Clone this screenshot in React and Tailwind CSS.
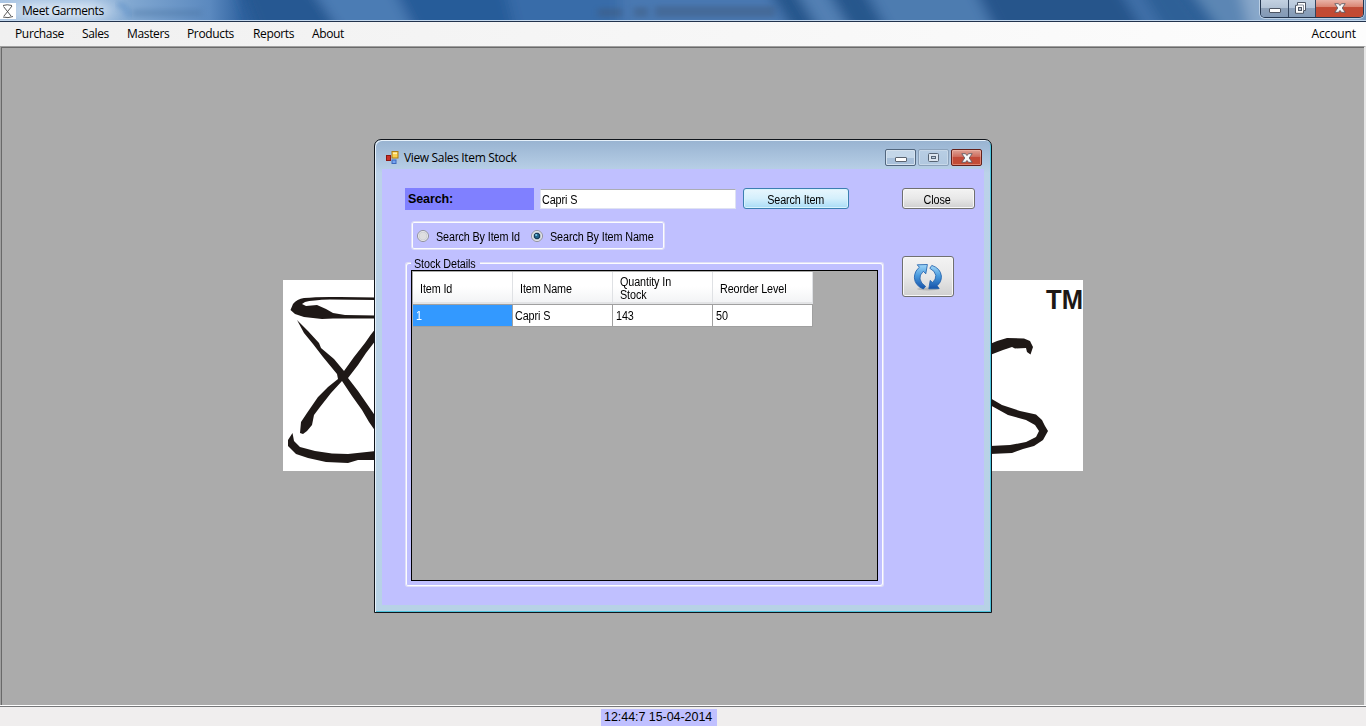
import React from 'react';

const ui = "font-['Open_Sans','Noto_Sans',sans-serif]";
const ms = "font-['Liberation_Sans',Arial,sans-serif]";

const menu = [
  ['Purchase', 'w-[67px]'],
  ['Sales', 'w-[45px]'],
  ['Masters', 'w-[60px]'],
  ['Products', 'w-[66px]'],
  ['Reports', 'w-[59px]'],
  ['About', 'w-[50px]'],
];

function Narrow({ children, center }) {
  return (
    <span className={`inline-block text-[12px] tracking-[-0.12px] whitespace-nowrap ${center ? 'origin-center scale-x-[0.9]' : 'origin-left scale-x-[0.9]'}`}>
      {children}
    </span>
  );
}

function AppIcon() {
  return (
    <svg width="16" height="16" viewBox="0 0 16 16" className="mt-[3px] shrink-0">
      <rect width="16" height="16" fill="#fff" />
      <path d="M3 2.5Q7 1 12 2.5M3.5 3.5L11 13M12 3L4 13M3 14Q8 15.5 13 13.5" fill="none" stroke="#444" strokeWidth=".9" />
    </svg>
  );
}

function Cross({ className }) {
  return (
    <svg width="12" height="10" viewBox="0 0 12 10" className={className}>
      <path d="M.8.7H4.5L6 2.6 7.5.7h3.7L8.2 5l3 4.3H7.5L6 7.4 4.5 9.3H.8L3.8 5z" fill="#f7f7f7" stroke="#54555f" strokeWidth=".8" />
    </svg>
  );
}

function MainButtons() {
  return (
    <div className="ml-auto mr-[2px] flex h-[18px] w-[104px] overflow-hidden rounded-b-[5px] border border-t-0 border-[#24364f] shadow-[0_0_0_1px_rgba(205,221,238,0.75)]">
      <div className="flex w-[28px] items-start justify-center border-r border-[#34455e] bg-linear-to-b from-[#c3d1e1] from-0% via-[#b3c3d6] via-45% to-[#a3b9d3] shadow-[inset_0_-9px_0_rgba(50,75,110,0.28)]">
        <span className="mt-[8px] h-[5px] w-[12px] rounded-[1px] border border-[#4d5563] bg-white" />
      </div>
      <div className="flex w-[27px] justify-center border-r border-[#34455e] bg-linear-to-b from-[#c3d1e1] to-[#a3b9d3] shadow-[inset_0_-9px_0_rgba(50,75,110,0.28)]">
        <svg width="13" height="12" viewBox="0 0 13 12" className="mt-[2px] -ml-[3px]">
          <path d="M3.5 .5h8v8h-2v2.8h-8v-8h2z" fill="#fff" stroke="#4d5563" />
          <path d="M4 3h5.5v5.5" fill="none" stroke="#8d95a2" />
          <rect x="4.5" y="5.5" width="3" height="3" fill="#b9c2ce" stroke="#4d5563" />
        </svg>
      </div>
      <div className="flex flex-1 justify-center bg-linear-to-b from-[#e9b3a8] from-0% via-[#d67c69] via-48% to-[#dc7a60] shadow-[inset_0_-10px_0_rgba(175,35,12,0.55)]">
        <Cross className="mt-[3px]" />
      </div>
    </div>
  );
}

function TitleBar() {
  return (
    <div className="relative flex h-[22px] items-start overflow-hidden border-b border-[#22334d] bg-[#2c5f98]">
      <svg width="1366" height="20" viewBox="0 0 1366 20" preserveAspectRatio="none" className="absolute left-0 top-0">
        <defs>
          <filter id="soft" x="-20%" y="-100%" width="140%" height="300%"><feGaussianBlur stdDeviation="7 2" /></filter>
          <filter id="glow" x="-30%" y="-200%" width="160%" height="500%"><feGaussianBlur stdDeviation="12 4" /></filter>
          <filter id="soft2" x="-20%" y="-100%" width="140%" height="300%"><feGaussianBlur stdDeviation="3 2.2" /></filter>
          <linearGradient id="sky" x1="0" x2="1">
            <stop offset="0" stopColor="#a9c4e2" />
            <stop offset=".22" stopColor="#a4c1e0" />
            <stop offset=".32" stopColor="#7fa6d0" />
            <stop offset=".5" stopColor="#5b89bf" />
            <stop offset=".58" stopColor="#2f629f" />
            <stop offset="1" stopColor="#2c5f9b" />
          </linearGradient>
        </defs>
        <rect width="420" height="20" fill="url(#sky)" />
        <g filter="url(#soft)">
          <path d="M240-10h70l30 40h-85z" fill="#285992" />
          <path d="M312-10h82l20 40h-75z" fill="#4b7cb4" />
          <path d="M396-10h116l10 40H416z" fill="#285c99" />
          <path d="M505-10h120v40H515z" fill="#386ca9" />
          <path d="M620-10h150l25 40H620z" fill="#4878b1" />
          <path d="M768-10h26l24 40h-26z" fill="#27568c" />
          <path d="M796-10h30l24 40h-30z" fill="#5380b4" />
          <path d="M830-10h32l24 40h-34z" fill="#27568c" />
          <path d="M866-10h108l20 40H888z" fill="#4d7bb0" />
          <path d="M978-10h140l24 40H998z" fill="#27558b" />
          <path d="M1120-10h20l24 40h-20z" fill="#3f70a8" />
          <path d="M1142-10h40l30 40h-46z" fill="#2e6097" />
          <path d="M1190-10h80v40h-50z" fill="#5c86b4" />
          <path d="M1240-10h130v40H1250z" fill="#89a8ca" />
        </g>
        <path d="M18 3h88v15H18z" fill="#e3edf8" opacity=".8" filter="url(#glow)" />
        <path d="M598 8h24v9h-24zM634 7h14v10h-14zM655 6h120v11H655z" fill="#41587a" opacity=".42" filter="url(#soft2)" />
        <path d="M118 4q9 2 11 13" fill="none" stroke="#5c8fc6" strokeWidth="6" opacity=".55" filter="url(#soft2)" />
        <path d="M132 9h70v8h-70z" fill="#46719f" opacity=".3" filter="url(#soft2)" />
      </svg>
      <div className="relative flex h-[21px] w-full items-start border-b border-[#c3d7ec]">
        <AppIcon />
        <span className={`${ui} ml-[6px] text-[12px] leading-[21px] tracking-[-0.42px] whitespace-nowrap text-black`}>Meet Garments</span>
        <MainButtons />
      </div>
    </div>
  );
}

function Logo() {
  return (
    <svg width="800" height="191" viewBox="283 280 800 191">
      <rect x="283" y="280" width="800" height="191" fill="#fff" />
      <g fill="#1e1816">
        <path d="M290.500 310L293 304Q297 299 304 298Q318 296.500 340 297L376 297.500V300Q350 299.500 330 299.500Q312 300 305 302L302 304L306 306L317 305L326 309L333 313L345 315L376 315.500V318.500L333 318.500L322 319L304 317L295 314Z" />
        <path d="M297 320L308 331L319 343L321 348L334 359L344 371L354 357L365 343Q371 334 376 328V340L366 353L358 365L348 378L358 391L367 404L376 417V432L369 422L362 410L352 396L342 381L331 393L320 407L314 415L312 425L307 431L303 434L300 433L301 422L307 413L318 397L328 387L338 379L337 374L323 357L313 344L304 333Z" />
        <path d="M292.500 433L294 441L300 447L315 451L332 453.500L348 454L376 451V460L358 460L348 463L326 462L308 458L296 454L288 446L288 440Z" />
        <path d="M990 344Q999 340 1007 338L1024 338.500L1030 341L1033 347L1030.500 354.500L1027 352L1026 348L1015 348.500L1012 347L1003 350L990 355Z" />
        <path d="M990 398L1002 405L1020 411L1036 414.500L1042 420L1045 426L1048 431L1043 440L1034 446L1023 449L1012 453L990 454V446L1010 445L1026 442L1036 437L1039 431L1035 425L1026 420L1008 415L990 405Z" />
      </g>
      <text x="1046" y="309" fontFamily="Liberation Sans" fontWeight="bold" fontSize="27" textLength="37" lengthAdjust="spacingAndGlyphs" fill="#1e1816">TM</text>
    </svg>
  );
}

function FormIcon() {
  return (
    <svg width="13" height="13" viewBox="0 0 13 13" className="shrink-0">
      <rect x=".5" y="4.500" width="4" height="5" fill="#c9302a" stroke="#8c1712" />
      <rect x="6" y=".5" width="6" height="6.500" fill="#fbd04c" stroke="#ad7c17" />
      <rect x="6" y="9" width="4" height="3.500" fill="#76a5f2" stroke="#3d69bb" />
      <path d="M7 1.600h4v1.500H7z" fill="#fff0ae" />
    </svg>
  );
}

function RefreshIcon() {
  return (
    <svg width="30" height="28" viewBox="0 0 30 28">
      <defs>
        <linearGradient id="blueArrow" x1="0" y1="0" x2="0" y2="1">
          <stop offset="0" stopColor="#a2d8f8" />
          <stop offset=".45" stopColor="#4a9bde" />
          <stop offset="1" stopColor="#1451a8" />
        </linearGradient>
      </defs>
      <ellipse cx="15" cy="26" rx="11" ry="1.500" fill="#777" opacity=".35" />
      <path d="M4.200 1.800L14.400 1.500L12.800 10.800L10.300 8.300Q6.300 12 7 16Q7.800 20.400 12.600 23.400L10.300 26Q1.800 22.500 1.400 14.800Q1.400 8.200 6.400 4.300Z" fill="url(#blueArrow)" stroke="#195aa8" strokeWidth=".8" />
      <path d="M18.800 2.400Q27.400 5.200 28.400 13Q28.600 19.400 24 22.600L26.200 25.600L15.800 25.800L17.200 17.400L19.500 19.600Q23.200 16.200 22.800 12.300Q22 7.800 16.800 5.300Z" fill="url(#blueArrow)" stroke="#195aa8" strokeWidth=".8" />
    </svg>
  );
}

function DialogTitle() {
  return (
    <div className="flex h-[28px] items-start pl-[10px] pr-[8px]">
      <div className="mt-[10px]"><FormIcon /></div>
      <span className={`${ui} ml-[5px] mt-[8px] text-[12px] leading-[18px] tracking-[-0.35px] whitespace-nowrap text-black`}>View Sales Item Stock</span>
      <div className="ml-auto mt-[8px] flex">
        <div className="mr-[2px] flex h-[17px] w-[31px] justify-center rounded-[2px] border border-[#52677f] bg-linear-to-b from-[#c4d7e9] from-50% to-[#a8c0da] to-50% shadow-[inset_0_0_0_1px_#d5e2ef]">
          <span className="mt-[7px] h-[5px] w-[12px] rounded-[1px] border border-[#5b6470] bg-white" />
        </div>
        <div className="mr-[2px] flex h-[17px] w-[31px] justify-center rounded-[2px] border border-[#8ba1ba] bg-linear-to-b from-[#b8cee4] to-[#b0c7df] shadow-[inset_0_0_0_1px_#c7d8e9]">
          <svg width="11" height="9" viewBox="0 0 11 9" className="mt-[3px]">
            <rect x=".5" y=".5" width="10" height="8" rx="1" fill="#dce5ef" stroke="#566474" />
            <rect x="3.500" y="3.500" width="4" height="2" fill="#c1cfdf" stroke="#566474" />
          </svg>
        </div>
        <div className="flex h-[17px] w-[31px] justify-center rounded-[2px] border border-[#63201a] bg-linear-to-b from-[#dda296] from-0% via-[#cc6657] via-49% to-[#d06a50] shadow-[inset_0_0_0_1px_rgba(255,195,180,0.45),inset_0_-8px_0_rgba(175,30,8,0.38)]">
          <Cross className="mt-[3px]" />
        </div>
      </div>
    </div>
  );
}

function Radio({ on }) {
  return (
    <svg width="12" height="12" viewBox="0 0 12 12" className="shrink-0">
      <circle cx="6" cy="6" r="5.500" fill="#f4f4f4" stroke="#8e8f9a" />
      <circle cx="6" cy="6" r="4" fill={on ? '#c9dcea' : '#dedee0'} stroke="#c2c5cc" strokeWidth=".6" />
      {on && <circle cx="6" cy="6" r="2.800" fill="#23648c" stroke="#102f4a" strokeWidth="1" />}
      {on && <circle cx="5.200" cy="5" r="1.100" fill="#7ccbe8" />}
    </svg>
  );
}

function Filters() {
  return (
    <div className="ml-[29px] mt-[11px] flex h-[29px] w-[254px] items-center rounded-[3px] border border-[#dfdff6] pl-[5px] shadow-[inset_0_0_0_1px_#fcfcff]">
      <Radio />
      <span className="ml-[7px] w-[95px]"><Narrow>Search By Item Id</Narrow></span>
      <Radio on />
      <span className="ml-[7px] w-[104px]"><Narrow>Search By Item Name</Narrow></span>
    </div>
  );
}

function StockGrid() {
  const head = "flex items-center border-r border-[#dfe1e4] pl-[7px] pt-[2px]";
  const cell = "flex items-center border-r border-b border-[#a0a0a0] bg-white pt-px";
  return (
    <div className="h-[311px] w-[467px] border border-black bg-[#ababab] leading-[13px]">
      <div className="ml-px mt-px grid h-[33px] w-[400px] grid-cols-4 border-b border-[#a0a0a0] bg-linear-to-b from-white from-45% to-[#f1f2f4] shadow-[inset_0_-2px_0_#e3e4e6]">
        <div className={head}><Narrow>Item Id</Narrow></div>
        <div className={head}><Narrow>Item Name</Narrow></div>
        <div className={head}><Narrow>Quantity In<br />Stock</Narrow></div>
        <div className={head}><Narrow>Reorder Level</Narrow></div>
      </div>
      <div className="ml-px grid h-[22px] w-[400px] grid-cols-4">
        <div className="flex items-center border-r border-b border-[#a0a0a0] bg-[#3399ff] pl-[3px] pt-px text-white"><Narrow>1</Narrow></div>
        <div className={`${cell} pl-[2px]`}><Narrow>Capri S</Narrow></div>
        <div className={`${cell} pl-[3px]`}><Narrow>143</Narrow></div>
        <div className={`${cell} pl-[3px]`}><Narrow>50</Narrow></div>
      </div>
    </div>
  );
}

function StockPanel() {
  return (
    <div className="ml-[23px] mt-[7px] w-[479px]">
      <div className="flex h-[13px] items-center">
        <span className="h-[8px] w-[6px] shrink-0 self-end rounded-tl-[3px] border-l border-t border-[#dfdff6] shadow-[inset_1px_1px_0_#fcfcff]" />
        <span className="w-[69px] shrink-0 pl-[3px] leading-[13px]"><Narrow>Stock Details</Narrow></span>
        <span className="h-[8px] flex-1 self-end rounded-tr-[3px] border-r border-t border-[#dfdff6] shadow-[inset_-1px_1px_0_#fcfcff]" />
      </div>
      <div className="h-[317px] rounded-b-[3px] border border-t-0 border-[#dfdff6] pl-[5px] shadow-[inset_1px_0_0_#fcfcff,inset_-1px_-1px_0_#fcfcff]">
        <StockGrid />
      </div>
    </div>
  );
}

function Dialog() {
  return (
    <div className="absolute left-[374px] top-[139px] h-[474px] w-[618px] rounded-t-[7px] border border-[#10151b] bg-linear-to-b from-[#98b3d1] from-0% via-[#bbd2e9] via-[7%] to-[#b7d2e6] p-px shadow-[inset_1px_1px_0_#e6f1fb,inset_-1px_-1px_0_#4ec3dc]">
      <DialogTitle />
      <div className={`${ms} mx-[6px] flex h-[436px] bg-[#c0c0ff] text-black`}>
        <div className="flex w-[520px] shrink-0 flex-col">
          <div className="flex h-[41px] pl-[23px] pt-[19px]">
            <div className="h-[22px] w-[129px] shrink-0 bg-[#8080ff] pl-[3px] text-[12.5px] leading-[22px] font-bold tracking-[-0.1px]">Search:</div>
            <div className="ml-[6px] mt-[1px] h-[20px] w-[196px] shrink-0 border border-[#dfe2f2] border-t-[#abadb3] bg-white pl-px leading-[18px]"><Narrow>Capri S</Narrow></div>
            <div className="ml-[7px] h-[21px] w-[106px] shrink-0 rounded-[3px] border border-[#3c7fb1] bg-linear-to-b from-[#e8f6fd] from-0% via-[#d4effc] via-50% to-[#a8dcf6] pr-px text-center leading-[20px] shadow-[inset_0_0_0_1px_#d8f3fd]"><Narrow center>Search Item</Narrow></div>
          </div>
          <Filters />
          <StockPanel />
        </div>
        <div className="flex flex-col items-start pt-[19px]">
          <div className="h-[21px] w-[73px] rounded-[3px] border border-[#707070] bg-linear-to-b from-[#f3f3f3] from-0% via-[#e8e8e8] via-50% to-[#d0d0d0] pr-[2px] text-center leading-[20px] shadow-[inset_0_0_0_1px_#f7f7f7]"><Narrow center>Close</Narrow></div>
          <div className="mt-[47px] flex h-[41px] w-[52px] items-center justify-center rounded-[3px] border border-[#707070] bg-linear-to-b from-[#f3f3f3] from-0% via-[#e8e8e8] via-50% to-[#d0d0d0] shadow-[inset_0_0_0_1px_#f7f7f7]">
            <RefreshIcon />
          </div>
        </div>
      </div>
    </div>
  );
}

export default function App() {
  return (
    <div className="relative flex h-[726px] w-[1366px] flex-col overflow-hidden bg-[#f0eeee]">
      <TitleBar />
      <div className={`${ui} flex h-[24px] bg-linear-to-r from-[#f0f0f0] to-[#fdfdfd] pl-[15px] text-[12px] leading-[24px] tracking-[-0.35px] text-black`}>
        {menu.map(([label, cls]) => <span key={label} className={`${cls} shrink-0 whitespace-nowrap`}>{label}</span>)}
        <span className="ml-auto mr-[10px] tracking-[-0.1px]">Account</span>
      </div>
      <div className="flex h-[659px] justify-center border-t border-r-2 border-l border-t-[#a0a0a0] border-r-[#e6e6e6] border-l-[#a0a0a0] bg-[#ababab] pt-[233px] pl-px shadow-[inset_1px_1px_0_#696969]">
        <Logo />
      </div>
      <div className="h-px bg-white" />
      <div className="flex flex-1 border-t border-[#77787a] bg-[#f0eeee] pl-[601px]">
        <div className={`${ms} mt-[2px] h-[17px] w-[116px] bg-[#c0c0ff] pl-[3px] text-[12.5px] leading-[17px] tracking-[-0.05px] whitespace-nowrap text-black`}>12:44:7 15-04-2014</div>
      </div>
      <Dialog />
    </div>
  );
}
